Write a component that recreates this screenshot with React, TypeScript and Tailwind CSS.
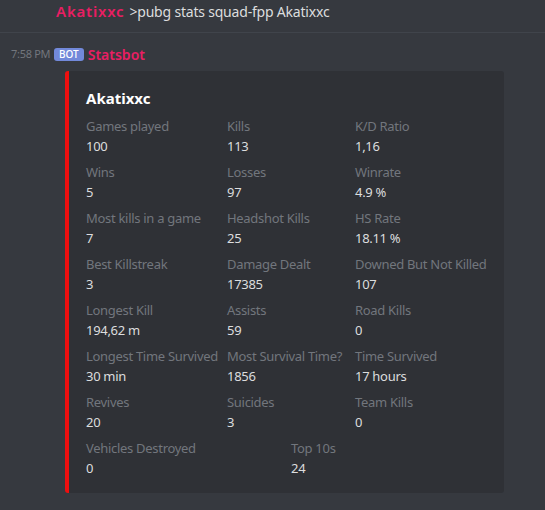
const FIELDS: [string, string][] = [
  ["Games played", "100"],
  ["Kills", "113"],
  ["K/D Ratio", "1,16"],
  ["Wins", "5"],
  ["Losses", "97"],
  ["Winrate", "4.9 %"],
  ["Most kills in a game", "7"],
  ["Headshot Kills", "25"],
  ["HS Rate", "18.11 %"],
  ["Best Killstreak", "3"],
  ["Damage Dealt", "17385"],
  ["Downed But Not Killed", "107"],
  ["Longest Kill", "194,62 m"],
  ["Assists", "59"],
  ["Road Kills", "0"],
  ["Longest Time Survived", "30 min"],
  ["Most Survival Time?", "1856"],
  ["Time Survived", "17 hours"],
  ["Revives", "20"],
  ["Suicides", "3"],
  ["Team Kills", "0"],
];

const LAST_ROW: [string, string][] = [
  ["Vehicles Destroyed", "0"],
  ["Top 10s", "24"],
];

function Field({ name, value }: { name: string; value: string }) {
  return (
    <div className="whitespace-nowrap tracking-[-0.3px]">
      <div className="text-[13px] leading-[20px] text-[#72767d]">{name}</div>
      <div className="text-[13px] leading-[20px] text-[#dcddde]">{value}</div>
    </div>
  );
}

export default function App() {
  return (
    <div
      className="h-[510px] w-[545px] overflow-hidden bg-[#36393f]"
      style={{ fontFamily: '"Noto Sans", "Open Sans", sans-serif' }}
    >
      <div className="h-[33px] border-b border-[#40444b] pl-[56px]">
        <div className="text-[14px] leading-[22px] tracking-[-0.2px] text-[#dcddde]">
          <span className="mr-[5px] text-[15px] font-semibold tracking-[0.8px] text-[#e91e63]">Akatixxc</span>
          &gt;pubg stats squad-fpp Akatixxc
        </div>
      </div>

      <div className="flex h-[38px] items-center pt-[4px]">
        <span className="w-[54px] pl-[11px] text-[11px] tracking-[-0.3px] text-[#72767d]">7:58 PM</span>
        <span className="rounded-[3px] bg-[#7289da] px-[5px] text-[10px] leading-[13px] font-medium text-white">BOT</span>
        <span className="ml-[4px] text-[14px] font-semibold text-[#e91e63]">Statsbot</span>
      </div>

      <div className="ml-[65px] flex w-[439px]">
        <div className="w-[4px] shrink-0 rounded-l-[3px] bg-[#ee0f0f]" />
        <div className="flex-1 rounded-r-[3px] bg-[#2f3136] pb-[15px] pl-[17px] pr-[12px] pt-[16px]">
          <div className="mb-[7px] text-[15px] font-bold leading-[22px] text-white">Akatixxc</div>
          <div className="grid grid-cols-[141px_128px_1fr] gap-y-[6px]">
            {FIELDS.map(([n, v]) => (
              <Field key={n} name={n} value={v} />
            ))}
          </div>
          <div className="mt-[6px] grid grid-cols-[205px_1fr]">
            {LAST_ROW.map(([n, v]) => (
              <Field key={n} name={n} value={v} />
            ))}
          </div>
        </div>
      </div>
    </div>
  );
}
